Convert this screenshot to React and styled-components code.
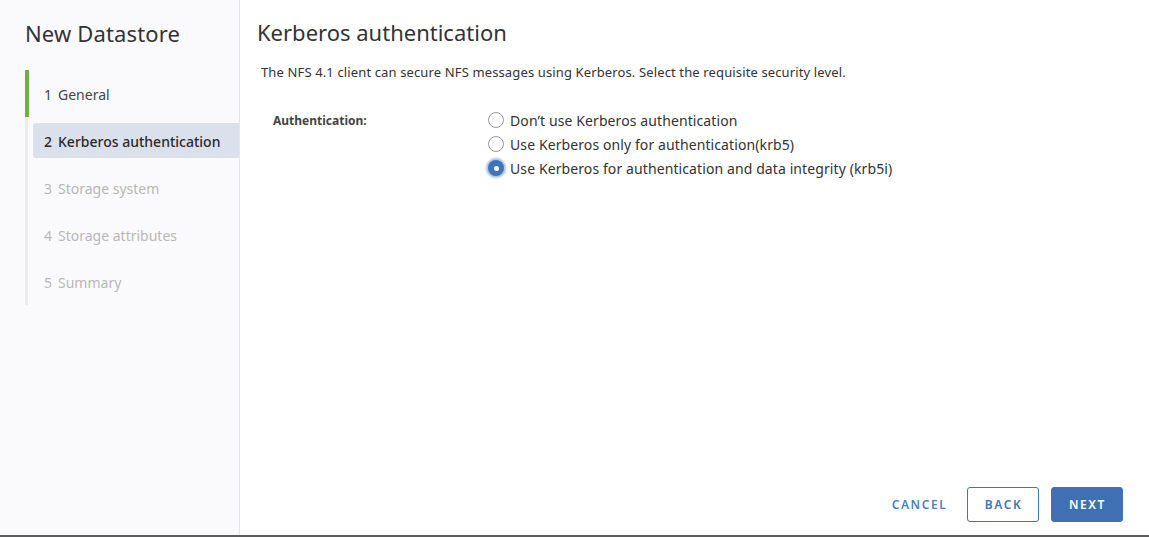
import React from "react";
import styled, { createGlobalStyle } from "styled-components";

const Global = createGlobalStyle`
  html, body { margin: 0; padding: 0; background: #fff; }
  body { font-family: "Noto Sans", "Open Sans", sans-serif; color: #333; }
  * { box-sizing: border-box; }
`;

const Frame = styled.div`
  width: 1149px;
  height: 537px;
  display: flex;
  flex-direction: column;
  background: #fff;
`;

const Main = styled.div`
  flex: 1;
  display: flex;
  min-height: 0;
`;

const BottomEdge = styled.div`
  height: 2px;
  background: #5c5c5c;
`;

const Sidebar = styled.nav`
  width: 240px;
  flex-shrink: 0;
  background: #fafafc;
  border-right: 1px solid #e6e6ea;
  padding: 19px 0 0 25px;
`;

const WizardTitle = styled.h1`
  margin: 0;
  font-size: 22px;
  font-weight: 400;
  line-height: 28px;
  color: #333;
  letter-spacing: 0.15px;
`;

const Steps = styled.ol`
  list-style: none;
  margin: 23px 0 0;
  padding: 0;
`;

const Step = styled.li`
  display: flex;
  height: 47px;
`;

const StepBar = styled.span`
  width: ${(p) => (p.$done ? 4 : 3)}px;
  margin-right: ${(p) => (p.$done ? 4 : 5)}px;
  background: ${(p) => (p.$done ? "#6cb33e" : "#ececef")};
  flex-shrink: 0;
`;

const StepLabel = styled.div`
  flex: 1;
  margin: 6px 0;
  display: flex;
  align-items: center;
  padding: 1px 0 0 11px;
  border-radius: 3px 0 0 3px;
  font-size: 14px;
  background: ${(p) => (p.$active ? "#dbe1ec" : "transparent")};
  color: ${(p) => (p.$disabled ? "#b8b8b8" : p.$active ? "#2a2a2a" : "#454545")};
  font-weight: ${(p) => (p.$active ? 500 : 400)};
  gap: 6px;
`;

const Content = styled.section`
  flex: 1;
  display: flex;
  flex-direction: column;
  padding: 18px 26px 13px 17px;
`;

const Heading = styled.h2`
  margin: 0;
  font-size: 22px;
  font-weight: 400;
  line-height: 28px;
  color: #333;
`;

const Description = styled.p`
  margin: 17px 0 0 4px;
  font-size: 13px;
  line-height: 18px;
  letter-spacing: 0.13px;
  color: #333;
`;

const FormRow = styled.div`
  display: grid;
  grid-template-columns: 215px 1fr;
  margin: 27px 0 0 16px;
`;

const FieldLabel = styled.div`
  font-size: 12px;
  font-weight: 700;
  color: #444;
  line-height: 24px;
  padding-top: 1px;
`;

const RadioGroup = styled.div`
  display: flex;
  flex-direction: column;
`;

const RadioRow = styled.label`
  display: flex;
  align-items: center;
  height: 24px;
  gap: 6px;
  font-size: 14px;
  letter-spacing: 0.1px;
  color: #333;
`;

const RadioCircle = styled.span`
  width: 16px;
  height: 16px;
  border-radius: 50%;
  flex-shrink: 0;
  display: flex;
  align-items: center;
  justify-content: center;
  ${(p) =>
    p.$checked
      ? `background: #3f74bd; box-shadow: 0 0 2px 2px rgba(63,116,189,0.45);`
      : `border: 1.5px solid #999; background: #fff;`}
  &::after {
    content: "";
    width: 5px;
    height: 5px;
    border-radius: 50%;
    background: #fff;
    display: ${(p) => (p.$checked ? "block" : "none")};
  }
`;

const Spacer = styled.div`
  flex: 1;
`;

const Footer = styled.div`
  display: flex;
  justify-content: flex-end;
  gap: 12px;
`;

const Button = styled.button`
  width: 72px;
  height: 35px;
  border-radius: 3px;
  font-family: inherit;
  font-size: 12px;
  font-weight: 600;
  letter-spacing: 1.6px;
  text-transform: uppercase;
  cursor: pointer;
  padding: 0 0 0 1px;
  border: 1px solid ${(p) => (p.$variant === "link" ? "transparent" : "#3f74bd")};
  background: ${(p) => (p.$variant === "primary" ? "#3f70b3" : "transparent")};
  color: ${(p) =>
    p.$variant === "primary" ? "#fff" : p.$variant === "link" ? "#4a82c3" : "#3f74bd"};
`;

const steps = [
  { n: 1, label: "General", state: "done" },
  { n: 2, label: "Kerberos authentication", state: "active" },
  { n: 3, label: "Storage system", state: "disabled" },
  { n: 4, label: "Storage attributes", state: "disabled" },
  { n: 5, label: "Summary", state: "disabled" },
];

const options = [
  { label: "Don\u2019t use Kerberos authentication", checked: false },
  { label: "Use Kerberos only for authentication(krb5)", checked: false },
  { label: "Use Kerberos for authentication and data integrity (krb5i)", checked: true },
];

export default function App() {
  return (
    <>
      <Global />
      <Frame>
        <Main>
          <Sidebar>
            <WizardTitle>New Datastore</WizardTitle>
            <Steps>
              {steps.map((s) => (
                <Step key={s.n}>
                  <StepBar $done={s.state === "done"} />
                  <StepLabel
                    $active={s.state === "active"}
                    $disabled={s.state === "disabled"}
                  >
                    <span>{s.n}</span>
                    <span>{s.label}</span>
                  </StepLabel>
                </Step>
              ))}
            </Steps>
          </Sidebar>
          <Content>
            <Heading>Kerberos authentication</Heading>
            <Description>
              The NFS 4.1 client can secure NFS messages using Kerberos. Select the requisite security level.
            </Description>
            <FormRow>
              <FieldLabel>Authentication:</FieldLabel>
              <RadioGroup>
                {options.map((o) => (
                  <RadioRow key={o.label}>
                    <RadioCircle $checked={o.checked} />
                    {o.label}
                  </RadioRow>
                ))}
              </RadioGroup>
            </FormRow>
            <Spacer />
            <Footer>
              <Button $variant="link">Cancel</Button>
              <Button $variant="outline">Back</Button>
              <Button $variant="primary">Next</Button>
            </Footer>
          </Content>
        </Main>
        <BottomEdge />
      </Frame>
    </>
  );
}
